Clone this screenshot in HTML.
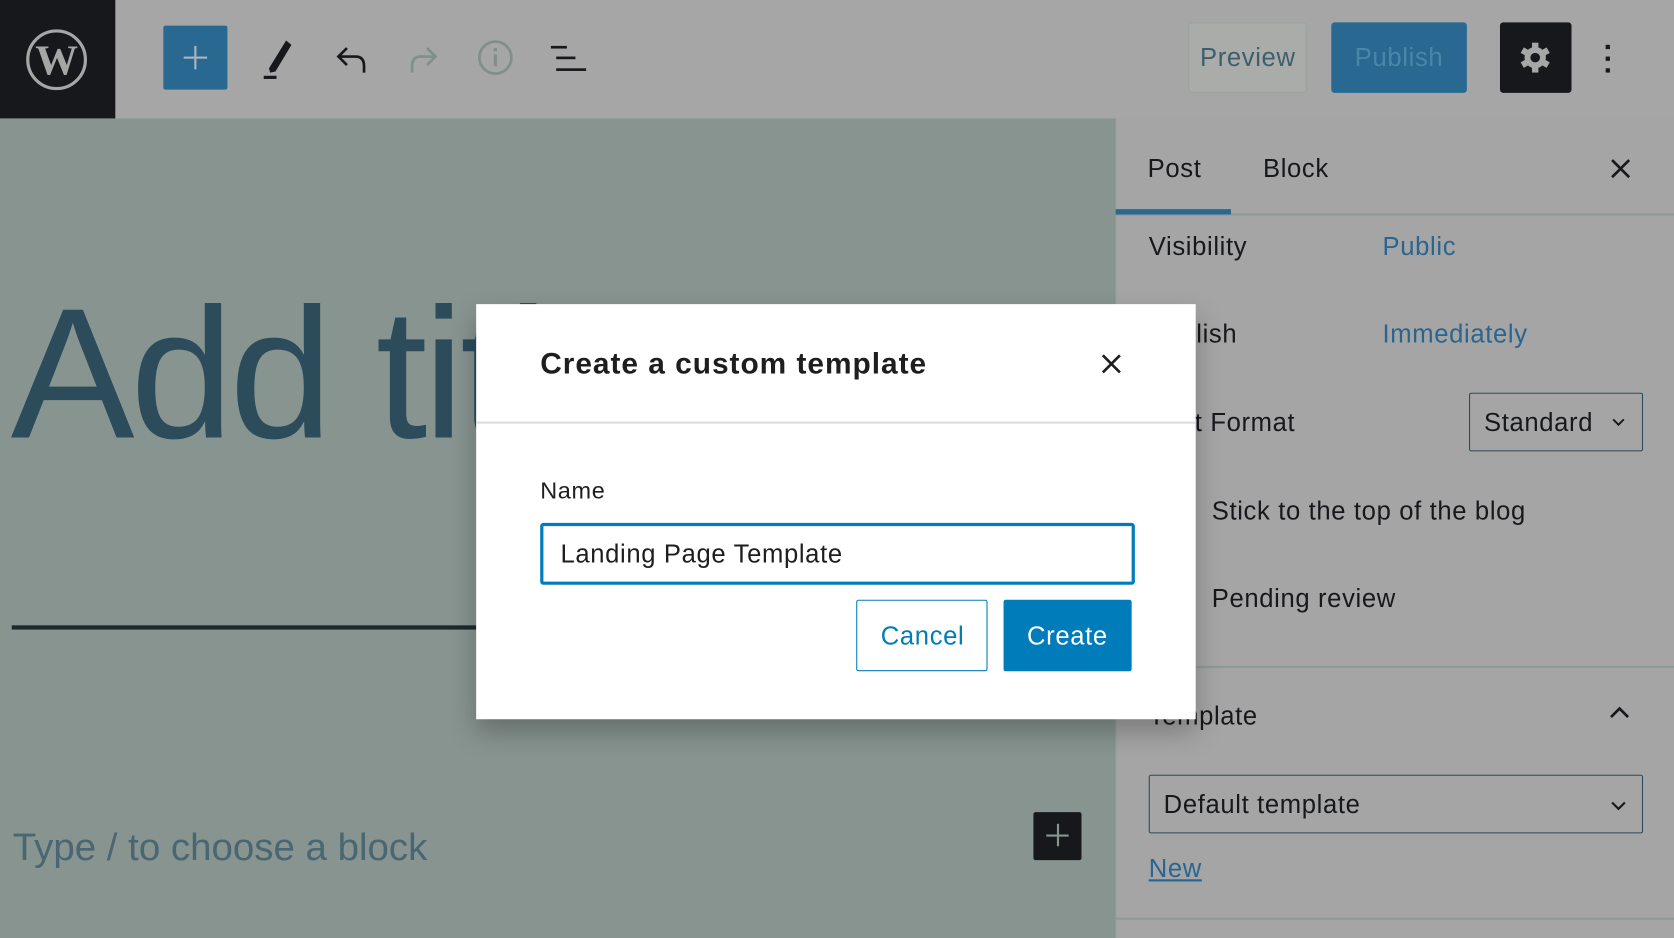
<!DOCTYPE html>
<html><head><meta charset="utf-8"><style>
html,body{margin:0;padding:0;width:1674px;height:938px;overflow:hidden;background:#879490}
#w{position:absolute;left:0;top:0;width:1568px;height:879px;transform:scale(1.06760,1.06712);transform-origin:0 0;font-family:"Liberation Sans",sans-serif;}
.a{position:absolute}
.t{position:absolute;white-space:nowrap;line-height:1;letter-spacing:0.6px}
</style></head><body><div id="w">
<div class="a" style="left:0;top:0;width:1568px;height:111px;background:#a6a6a6"></div>
<div class="a" style="left:0;top:0;width:108px;height:111px;background:#17181c"></div>
<svg class="a" style="left:24px;top:27px" width="58" height="58" viewBox="0 0 58 58"><circle cx="29" cy="29" r="27" fill="none" stroke="#a6a6a6" stroke-width="3"/><text x="29" y="43" text-anchor="middle" font-family="Liberation Serif" font-size="40" font-weight="bold" fill="#a6a6a6">W</text></svg>
<div class="a" style="left:153px;top:24px;width:60px;height:60px;background:#286891;border-radius:2px"></div>
<div class="a" style="left:172px;top:53px;width:22px;height:2px;background:#a9b6bf"></div>
<div class="a" style="left:182px;top:43px;width:2px;height:22px;background:#a9b6bf"></div>
<svg class="a" style="left:240px;top:30px" width="320" height="50" viewBox="0 0 320 50">
<path d="M12 34 L28 8 L33 12 L18 37 L13 38 Z" fill="#17181c"/><rect x="7" y="41" width="12" height="3" fill="#17181c"/>
<path d="M101 38 V32 Q101 23 93 23 H77 M85 15 L77 23 L85 31" fill="none" stroke="#17181c" stroke-width="2.5"/>
<path d="M146 38 V32 Q146 23 154 23 H168 M160 15 L168 23 L160 31" fill="none" stroke="#7f8f8a" stroke-width="2.5"/>
<circle cx="224" cy="24" r="15" fill="none" stroke="#7f8f8a" stroke-width="2.5"/><rect x="222.5" y="21" width="3" height="11" fill="#7f8f8a"/><rect x="222.5" y="15" width="3" height="3" fill="#7f8f8a"/>
<rect x="276" y="13" width="15" height="2.5" fill="#17181c"/><rect x="281" y="23" width="18" height="2.5" fill="#17181c"/><rect x="281" y="34" width="28" height="2.5" fill="#17181c"/>
</svg>
<div class="a" style="left:1113px;top:21px;width:111px;height:66px;background:#a9aca9;border-radius:3px;border:1px solid #9aa39f;box-sizing:border-box"></div>
<div class="t" style="left:1124px;top:43px;font-size:24px;color:#3f5e6d">Preview</div>
<div class="a" style="left:1247px;top:21px;width:127px;height:66px;background:#286891;border-radius:3px"></div>
<div class="t" style="left:1269px;top:43px;font-size:24px;color:#4a86a8">Publish</div>
<div class="a" style="left:1405px;top:21px;width:67px;height:66px;background:#17181c;border-radius:3px"></div>
<svg class="a" style="left:1423px;top:39px" width="30" height="30" viewBox="0 0 30 30"><g fill="#a6a6a6"><circle cx="15" cy="15" r="10"/><rect x="12" y="1" width="6" height="28"/><rect x="12" y="1" width="6" height="28" transform="rotate(60 15 15)"/><rect x="12" y="1" width="6" height="28" transform="rotate(120 15 15)"/></g><circle cx="15" cy="15" r="4.5" fill="#17181c"/></svg>
<div class="a" style="left:1504px;top:42px;width:4px;height:4px;background:#17181c"></div><div class="a" style="left:1504px;top:53px;width:4px;height:4px;background:#17181c"></div><div class="a" style="left:1504px;top:64px;width:4px;height:4px;background:#17181c"></div>

<div class="a" style="left:0;top:111px;width:1045px;height:768px;background:#879490"></div>
<div class="t" style="left:10px;top:263px;font-size:174px;color:#2c4b5b;letter-spacing:-4px">Add title</div>
<div class="a" style="left:11px;top:586px;width:460px;height:4px;background:#1c2a30"></div>
<div class="t" style="left:12px;top:776px;font-size:36px;color:#4a6672;letter-spacing:0">Type / to choose a block</div>
<div class="a" style="left:968px;top:761px;width:45px;height:45px;background:#17181c;border-radius:2px"></div>
<div class="a" style="left:980px;top:782px;width:21px;height:2px;background:#879490"></div><div class="a" style="left:990px;top:772px;width:2px;height:21px;background:#879490"></div>

<div class="a" style="left:1045px;top:111px;width:523px;height:768px;background:#a5a5a5;border-left:1px solid #9aa39f"></div>
<div class="t" style="left:1075px;top:147px;font-size:24px;color:#17181c">Post</div>
<div class="t" style="left:1183px;top:147px;font-size:24px;color:#17181c">Block</div>
<svg class="a" style="left:1508px;top:148px" width="20" height="20"><path d="M2 2 L18 18 M18 2 L2 18" stroke="#17181c" stroke-width="2.5"/></svg>
<div class="a" style="left:1045px;top:200px;width:523px;height:2px;background:#8e9a96"></div>
<div class="a" style="left:1045px;top:196px;width:108px;height:5px;background:#286891"></div>
<div class="t" style="left:1076px;top:220px;font-size:24px;color:#17181c">Visibility</div>
<div class="t" style="left:1295px;top:220px;font-size:24px;color:#2a6590">Public</div>
<div class="t" style="left:1076px;top:302px;font-size:24px;color:#17181c">Publish</div>
<div class="t" style="left:1295px;top:302px;font-size:24px;color:#2a6590">Immediately</div>
<div class="t" style="left:1076px;top:385px;font-size:24px;color:#17181c">Post Format</div>
<div class="a" style="left:1376px;top:368px;width:163px;height:55px;border:1.5px solid #2c4b5b;box-sizing:border-box;border-radius:2px"></div>
<div class="t" style="left:1390px;top:385px;font-size:24px;color:#17181c">Standard</div>
<svg class="a" style="left:1509px;top:391px" width="14" height="10"><path d="M2 2 L7 7 L12 2" fill="none" stroke="#17181c" stroke-width="1.8"/></svg>
<div class="t" style="left:1135px;top:468px;font-size:24px;color:#17181c">Stick to the top of the blog</div>
<div class="t" style="left:1135px;top:550px;font-size:24px;color:#17181c">Pending review</div>
<div class="a" style="left:1045px;top:624px;width:523px;height:2px;background:#8e9a96"></div>
<div class="t" style="left:1076px;top:660px;font-size:24px;color:#17181c">Template</div>
<svg class="a" style="left:1507px;top:661px" width="20" height="14"><path d="M2 11 L10 3 L18 11" fill="none" stroke="#17181c" stroke-width="2.5"/></svg>
<div class="a" style="left:1076px;top:726px;width:463px;height:55px;border:1.5px solid #2c4b5b;box-sizing:border-box;border-radius:2px"></div>
<div class="t" style="left:1090px;top:743px;font-size:24px;color:#17181c">Default template</div>
<svg class="a" style="left:1508px;top:749px" width="16" height="12"><path d="M2 3 L8 9 L14 3" fill="none" stroke="#17181c" stroke-width="2"/></svg>
<div class="t" style="left:1076px;top:803px;font-size:24px;color:#2a6590;text-decoration:underline">New</div>
<div class="a" style="left:1045px;top:860px;width:523px;height:2px;background:#8e9a96"></div>

<div class="a" style="left:446px;top:285px;width:674px;height:389px;background:#fff;box-shadow:0 12px 24px rgba(0,0,0,0.25)"></div>
<div class="t" style="left:506px;top:327px;font-size:28px;font-weight:bold;color:#1e1e1e;letter-spacing:0.9px">Create a custom template</div>
<svg class="a" style="left:1031px;top:331px" width="20" height="20"><path d="M2 2 L18 18 M18 2 L2 18" stroke="#1e1e1e" stroke-width="2.5"/></svg>
<div class="a" style="left:446px;top:395px;width:674px;height:2px;background:#dcdcde"></div>
<div class="t" style="left:506px;top:449px;font-size:22px;color:#1e1e1e">Name</div>
<div class="a" style="left:506px;top:490px;width:557px;height:58px;border:3px solid #007cba;box-sizing:border-box;border-radius:3px"></div>
<div class="t" style="left:525px;top:508px;font-size:24px;color:#1e1e1e">Landing Page Template</div>
<div class="a" style="left:802px;top:562px;width:123px;height:67px;border:1.5px solid #007cba;box-sizing:border-box;border-radius:2px"></div>
<div class="t" style="left:825px;top:585px;font-size:24px;color:#007cba">Cancel</div>
<div class="a" style="left:940px;top:562px;width:120px;height:67px;background:#007cba;border-radius:2px"></div>
<div class="t" style="left:962px;top:585px;font-size:24px;color:#fff">Create</div>
</div></body></html>
